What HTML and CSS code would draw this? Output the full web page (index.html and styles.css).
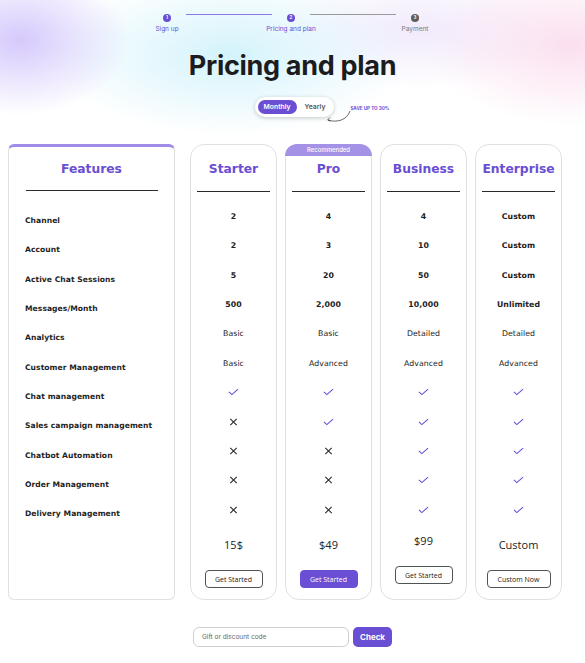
FILE: index.html
```html
<!DOCTYPE html>
<html>
<head>
<meta charset="utf-8">
<link rel="stylesheet" href="styles.css">
</head>
<body>
<div class="page">
  <div class="stepper">
    <div class="step done">
      <span class="dot">1</span>
      <span class="step-label">Sign up</span>
    </div>
    <div class="step-line active"></div>
    <div class="step current">
      <span class="dot">2</span>
      <span class="step-label">Pricing and plan</span>
    </div>
    <div class="step-line"></div>
    <div class="step todo">
      <span class="dot">3</span>
      <span class="step-label">Payment</span>
    </div>
  </div>

  <h1 class="title">Pricing and plan</h1>

  <div class="toggle-row">
    <div class="toggle">
      <span class="toggle-opt on">Monthly</span>
      <span class="toggle-opt">Yearly</span>
    </div>
    <div class="save">
      <span class="save-text">SAVE UP TO 30%</span>
      <svg class="save-arrow" width="30" height="16" viewBox="0 0 30 16"><path d="M25 1 C22 10 12 13 3 10" fill="none" stroke="#444" stroke-width="0.8"/><path d="M5 7.5 L2.6 10 L5.6 11.2" fill="none" stroke="#444" stroke-width="0.8"/></svg>
    </div>
  </div>

  <div class="plans">
    <div class="card features">
      <div class="card-head"><span class="card-title">Features</span></div>
      <ul class="rows">
        <li>Channel</li>
        <li>Account</li>
        <li>Active Chat Sessions</li>
        <li>Messages/Month</li>
        <li>Analytics</li>
        <li>Customer Management</li>
        <li>Chat management</li>
        <li>Sales campaign management</li>
        <li>Chatbot Automation</li>
        <li>Order Management</li>
        <li>Delivery Management</li>
      </ul>
    </div>

    <div class="card plan">
      <div class="card-head"><span class="card-title">Starter</span></div>
      <ul class="rows vals">
        <li class="b">2</li><li class="b">2</li><li class="b">5</li><li class="b">500</li>
        <li>Basic</li><li>Basic</li>
        <li><svg class="ic" viewBox="0 0 12 8"><path d="M1 3.8 L4.2 6.8 L11 0.8" class="chk"/></svg></li>
        <li><svg class="ic" viewBox="0 0 12 8"><path d="M2.5 0.5 L9.5 7.5 M9.5 0.5 L2.5 7.5" class="x"/></svg></li>
        <li><svg class="ic" viewBox="0 0 12 8"><path d="M2.5 0.5 L9.5 7.5 M9.5 0.5 L2.5 7.5" class="x"/></svg></li>
        <li><svg class="ic" viewBox="0 0 12 8"><path d="M2.5 0.5 L9.5 7.5 M9.5 0.5 L2.5 7.5" class="x"/></svg></li>
        <li><svg class="ic" viewBox="0 0 12 8"><path d="M2.5 0.5 L9.5 7.5 M9.5 0.5 L2.5 7.5" class="x"/></svg></li>
      </ul>
      <div class="price">15$</div>
      <button class="btn">Get Started</button>
    </div>

    <div class="card plan pro">
      <div class="badge">Recommended</div>
      <div class="card-head"><span class="card-title">Pro</span></div>
      <ul class="rows vals">
        <li class="b">4</li><li class="b">3</li><li class="b">20</li><li class="b">2,000</li>
        <li>Basic</li><li>Advanced</li>
        <li><svg class="ic" viewBox="0 0 12 8"><path d="M1 3.8 L4.2 6.8 L11 0.8" class="chk"/></svg></li>
        <li><svg class="ic" viewBox="0 0 12 8"><path d="M1 3.8 L4.2 6.8 L11 0.8" class="chk"/></svg></li>
        <li><svg class="ic" viewBox="0 0 12 8"><path d="M2.5 0.5 L9.5 7.5 M9.5 0.5 L2.5 7.5" class="x"/></svg></li>
        <li><svg class="ic" viewBox="0 0 12 8"><path d="M2.5 0.5 L9.5 7.5 M9.5 0.5 L2.5 7.5" class="x"/></svg></li>
        <li><svg class="ic" viewBox="0 0 12 8"><path d="M2.5 0.5 L9.5 7.5 M9.5 0.5 L2.5 7.5" class="x"/></svg></li>
      </ul>
      <div class="price">$49</div>
      <button class="btn primary">Get Started</button>
    </div>

    <div class="card plan">
      <div class="card-head"><span class="card-title">Business</span></div>
      <ul class="rows vals">
        <li class="b">4</li><li class="b">10</li><li class="b">50</li><li class="b">10,000</li>
        <li>Detailed</li><li>Advanced</li>
        <li><svg class="ic" viewBox="0 0 12 8"><path d="M1 3.8 L4.2 6.8 L11 0.8" class="chk"/></svg></li>
        <li><svg class="ic" viewBox="0 0 12 8"><path d="M1 3.8 L4.2 6.8 L11 0.8" class="chk"/></svg></li>
        <li><svg class="ic" viewBox="0 0 12 8"><path d="M1 3.8 L4.2 6.8 L11 0.8" class="chk"/></svg></li>
        <li><svg class="ic" viewBox="0 0 12 8"><path d="M1 3.8 L4.2 6.8 L11 0.8" class="chk"/></svg></li>
        <li><svg class="ic" viewBox="0 0 12 8"><path d="M1 3.8 L4.2 6.8 L11 0.8" class="chk"/></svg></li>
      </ul>
      <div class="price up">$99</div>
      <button class="btn up">Get Started</button>
    </div>

    <div class="card plan">
      <div class="card-head"><span class="card-title">Enterprise</span></div>
      <ul class="rows vals">
        <li class="b">Custom</li><li class="b">Custom</li><li class="b">Custom</li><li class="b">Unlimited</li>
        <li>Detailed</li><li>Advanced</li>
        <li><svg class="ic" viewBox="0 0 12 8"><path d="M1 3.8 L4.2 6.8 L11 0.8" class="chk"/></svg></li>
        <li><svg class="ic" viewBox="0 0 12 8"><path d="M1 3.8 L4.2 6.8 L11 0.8" class="chk"/></svg></li>
        <li><svg class="ic" viewBox="0 0 12 8"><path d="M1 3.8 L4.2 6.8 L11 0.8" class="chk"/></svg></li>
        <li><svg class="ic" viewBox="0 0 12 8"><path d="M1 3.8 L4.2 6.8 L11 0.8" class="chk"/></svg></li>
        <li><svg class="ic" viewBox="0 0 12 8"><path d="M1 3.8 L4.2 6.8 L11 0.8" class="chk"/></svg></li>
      </ul>
      <div class="price">Custom</div>
      <button class="btn wide">Custom Now</button>
    </div>
  </div>

  <div class="code-row">
    <input class="code" type="text" placeholder="Gift or discount code">
    <button class="check">Check</button>
  </div>
</div>
</body>
</html>
```
FILE: styles.css
```css
* { box-sizing: border-box; }
html, body { margin: 0; padding: 0; }
body {
  width: 585px;
  height: 663px;
  overflow: hidden;
  font-family: "Inter", "Liberation Sans", sans-serif;
  color: #1d1d1f;
  background:
    radial-gradient(ellipse 110px 75px at 20px 40px, rgba(185,165,250,0.6), rgba(185,165,250,0) 100%),
    radial-gradient(ellipse 180px 80px at 230px 55px, rgba(200,240,250,0.8), rgba(200,240,250,0) 100%),
    radial-gradient(ellipse 140px 80px at 570px 45px, rgba(250,215,235,0.8), rgba(250,215,235,0) 100%),
    radial-gradient(ellipse 140px 60px at 420px 30px, rgba(235,225,250,0.7), rgba(235,225,250,0) 100%),
    #ffffff;
}
.page { display: flex; flex-direction: column; align-items: stretch; }

/* stepper */
.stepper {
  display: flex;
  justify-content: center;
  align-items: flex-start;
  padding-top: 14px;
  padding-right: 3px;
}
.step { display: flex; flex-direction: column; align-items: center; width: 0; }
.dot {
  width: 8px; height: 8px; border-radius: 50%;
  background: #6a4ed3; color: #fff;
  font-size: 4.5px; line-height: 8px; text-align: center; font-weight: 700;
  flex: none;
}
.todo .dot { background: #5b5b5b; }
.step-label {
  margin-top: 3px;
  font-size: 6.5px;
  white-space: nowrap;
  color: #6a4ed3;
}
.todo .step-label { color: #7a7a7a; }
.step-line { width: 86px; height: 1px; background: #9a9a9a; margin: 0 19px; }
.step-line.active { background: #8a78e6; }

/* title */
.title {
  margin: 17px 0 0 0;
  text-align: center;
  font-size: 27px;
  font-weight: 700;
  letter-spacing: -0.3px;
  color: #1c1c1e;
  line-height: 32px;
}

/* toggle */
.toggle-row {
  display: flex;
  justify-content: center;
  margin-top: 15px;
  padding-left: 80px;
  height: 30px;
}
.toggle {
  display: flex;
  align-items: center;
  gap: 2px;
  height: 20px;
  padding: 2px 3px;
  background: #fff;
  border-radius: 10px;
  box-shadow: 0 1px 4px rgba(0,0,0,0.22);
}
.toggle-opt {
  font-size: 6.8px;
  font-weight: 600;
  color: #555;
  padding: 0 6px;
  height: 14px;
  line-height: 14px;
  border-radius: 7px;
}
.toggle-opt.on { background: #6a4ed3; color: #fff; }
.save { position: relative; width: 60px; margin-left: 16px; }
.save-text {
  display: block;
  margin-top: 9px;
  font-size: 4.6px;
  font-weight: 700;
  color: #6a4ed3;
  white-space: nowrap;
}
.save-arrow { position: absolute; left: -25px; top: 13px; }

/* plans */
.plans {
  display: flex;
  align-items: stretch;
  margin-top: 17px;
  padding-left: 8px;
  gap: 8px;
  height: 456px;
}
.card {
  position: relative;
  background: #fff;
  border: 1px solid #e1e1e4;
  display: flex;
  flex-direction: column;
  align-items: center;
  font-family: "DejaVu Sans", "Liberation Sans", sans-serif;
}
.features {
  width: 167px;
  border-radius: 6px;
  border-top: 3px solid #a08be6;
  margin-right: 7px;
  align-items: stretch;
}
.plan {
  width: 87px;
  border-radius: 14px;
}
.card-head {
  width: 132px;
  align-self: center;
  border-bottom: 1.3px solid #2a2a2a;
  display: flex;
  justify-content: center;
  align-items: center;
}
.plan .card-head { width: 73px; height: 47px; padding-top: 2px; }
.features .card-head { height: 44px; padding-top: 1px; }
.card-title {
  font-size: 12.3px;
  font-weight: 700;
  color: #6a4ed3;
}
.rows {
  list-style: none;
  margin: 14px 0 0 0;
  padding: 0;
}
.features .rows { padding-left: 16px; margin-top: 15px; }
.rows li {
  height: 29.3px;
  display: flex;
  align-items: center;
  font-size: 7.6px;
  font-weight: 700;
  color: #1f1f1f;
  white-space: nowrap;
  letter-spacing: 0.05px;
}
.vals { width: 100%; margin-top: 10px; }
.vals li { justify-content: center; font-weight: 400; font-size: 7.8px; color: #222; }
.vals li.b { font-weight: 700; }
.ic { width: 11px; height: 8px; }
.chk { fill: none; stroke: #6a4ed3; stroke-width: 1.2; }
.x { fill: none; stroke: #2b2b2b; stroke-width: 1.2; }

.badge {
  position: absolute;
  top: -1px; left: -1px; right: -1px;
  height: 12px;
  background: #a592e6;
  color: #fff;
  font-family: "Inter", sans-serif;
  font-size: 6px;
  font-weight: 500;
  text-align: center;
  line-height: 12px;
  border-radius: 14px 14px 0 0;
}

.price {
  margin-top: 11px;
  font-family: "Open Sans", sans-serif;
  font-size: 11px;
  color: #222;
  height: 20px;
  line-height: 20px;
}
.price.up { margin-top: 7px; }
.btn {
  margin-top: 15px;
  height: 18px;
  padding: 0 4px;
  border: 1px solid #4d5552;
  border-radius: 4px;
  background: #fff;
  font-family: "Open Sans", sans-serif;
  font-size: 7px;
  font-weight: 500;
  color: #222;
  width: 58px;
}
.btn.up { width: 58px; }
.btn.wide { width: 64px; }
.btn.primary { background: #6a4ed3; color: #fff; border-color: #6a4ed3; }

/* code */
.code-row {
  display: flex;
  justify-content: center;
  gap: 4px;
  margin-top: 27px;
}
.code {
  width: 156px;
  height: 20px;
  border: 1px solid #cfcfd3;
  border-radius: 6px;
  padding: 0 8px;
  font-family: "Inter", sans-serif;
  font-size: 6.5px;
  outline: none;
  background: #fff;
}
.code::placeholder { color: #666; }
.check {
  width: 39px;
  height: 20px;
  border: none;
  border-radius: 5px;
  background: #6a4ed3;
  color: #fff;
  font-family: "Inter", sans-serif;
  font-weight: 700;
  font-size: 8px;
}
```
